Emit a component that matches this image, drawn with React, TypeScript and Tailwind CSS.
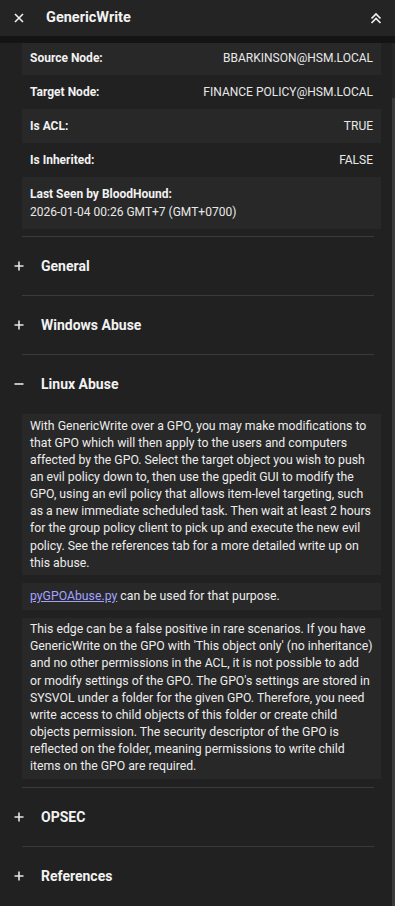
import React from "react";

const font = { fontFamily: "Roboto, 'Liberation Sans', sans-serif" };

function Plus() {
  return (
    <svg width="12" height="12" viewBox="0 0 12 12" className="shrink-0">
      <path d="M6 1.5v9M1.5 6h9" stroke="#e6e6e6" strokeWidth="1.6" />
    </svg>
  );
}
function Minus() {
  return (
    <svg width="12" height="12" viewBox="0 0 12 12" className="shrink-0">
      <path d="M1.5 6h9" stroke="#e6e6e6" strokeWidth="1.6" />
    </svg>
  );
}

function Row({ label, value, striped, first }: { label: string; value: string; striped?: boolean; first?: boolean }) {
  return (
    <div
      className={`flex items-center justify-between px-2 ${first ? "h-[32px] pb-[2px]" : "h-[34px]"} ${
        striped ? "bg-[#282828]" : ""
      }`}
    >
      <span className="text-[12px] font-bold text-[#f2f2f2]">{label}</span>
      <span className="text-[12px] text-[#e8e8e8]">{value}</span>
    </div>
  );
}

function Section({ title, open }: { title: string; open?: boolean }) {
  return (
    <div className="flex items-center h-[58px] pl-[13px]">
      {open ? <Minus /> : <Plus />}
      <span className="ml-[16px] text-[14px] font-bold text-[#f2f2f2]">{title}</span>
    </div>
  );
}

function Divider() {
  return <div className="h-px bg-[#3a3a3a] ml-[22px] w-[352px]" />;
}

export default function App() {
  return (
    <div className="relative w-[395px] h-[906px] overflow-hidden bg-[#212121] text-white" style={font}>
      <div className="flex items-center h-9 bg-[#242424] pl-[13px] pr-[12px]">
        <svg width="12" height="12" viewBox="0 0 12 12">
          <path d="M2 2l8 8M10 2l-8 8" stroke="#f0f0f0" strokeWidth="1.6" />
        </svg>
        <span className="ml-[21px] text-[14.5px] font-bold text-[#f2f2f2]">GenericWrite</span>
        <div className="ml-auto">
          <svg width="14" height="14" viewBox="0 0 14 14">
            <path d="M2.5 7.5L7 3l4.5 4.5M2.5 12L7 7.5l4.5 4.5" stroke="#f0f0f0" strokeWidth="1.7" fill="none" />
          </svg>
        </div>
      </div>
      <div className="h-[7px] bg-[#141414]" />
      <div className="pl-[22px] pr-[14px]">
        <Row label="Source Node:" value="BBARKINSON@HSM.LOCAL" striped first />
        <Row label="Target Node:" value="FINANCE POLICY@HSM.LOCAL" />
        <Row label="Is ACL:" value="TRUE" striped />
        <Row label="Is Inherited:" value="FALSE" />
        <div className="bg-[#282828] px-2 pt-[8px] pb-[8px] text-[12px] leading-[18px]">
          <div className="font-bold text-[#f2f2f2]">Last Seen by BloodHound:</div>
          <div className="text-[#e8e8e8]">2026-01-04 00:26 GMT+7 (GMT+0700)</div>
        </div>
      </div>
      <div className="h-[7px]" />
      <Divider />
      <Section title="General" />
      <Divider />
      <Section title="Windows Abuse" />
      <Divider />
      <Section title="Linux Abuse" open />
      <div className="mt-[1px] pl-[22px] pr-[14px] flex flex-col gap-[8px] text-[12.25px] leading-[17.15px] text-[#ececec]">
        <div className="bg-[#282828] px-2 py-[3.5px]">
          With GenericWrite over a GPO, you may make modifications to that GPO which will then apply to the users and
          computers affected by the GPO. Select the target object you wish to push an evil policy down to, then use the
          gpedit GUI to modify the GPO, using an evil policy that allows item-level targeting, such as a new immediate
          scheduled task. Then wait at least 2 hours for the group policy client to pick up and execute the new evil
          policy. See the references tab for a more detailed write up on this abuse.
        </div>
        <div className="bg-[#282828] px-2 py-[4.5px]">
          <span className="text-[#a3a3ff] underline">pyGPOAbuse.py</span> can be used for that purpose.
        </div>
        <div className="bg-[#282828] px-2 py-[3.5px]">
          This edge can be a false positive in rare scenarios. If you have GenericWrite on the GPO with 'This object
          only' (no inheritance) and no other permissions in the ACL, it is not possible to add or modify settings of
          the GPO. The GPO's settings are stored in SYSVOL under a folder for the given GPO. Therefore, you need write
          access to child objects of this folder or create child objects permission. The security descriptor of the GPO
          is reflected on the folder, meaning permissions to write child items on the GPO are required.
        </div>
      </div>
      <div className="h-[8.5px]" />
      <Divider />
      <Section title="OPSEC" />
      <Divider />
      <Section title="References" />
      <div className="absolute right-0 top-[43px] w-[3px] h-[55px] bg-[#262626]" />
      <div className="absolute right-0 top-[98px] bottom-0 w-[3px] bg-[#3a3a3a]" />
    </div>
  );
}
